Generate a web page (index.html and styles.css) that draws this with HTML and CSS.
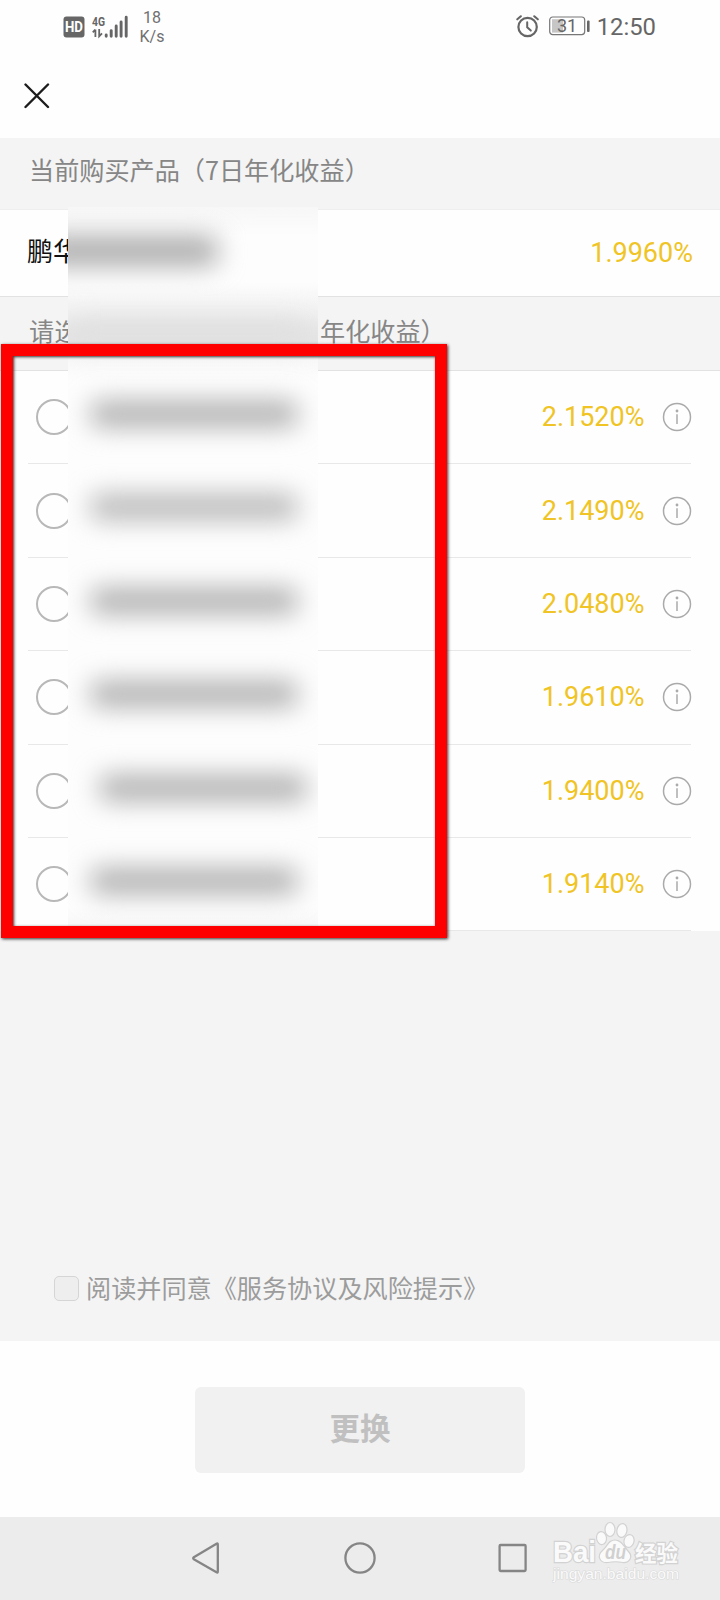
FILE: index.html
```html
<!DOCTYPE html>
<html lang="zh-CN">
<head>
<meta charset="utf-8">
<title>更换产品</title>
<link rel="stylesheet" href="styles.css">
</head>
<body>
<div class="screen">
  <header class="status">
    <div class="status-left">
      <svg class="hd" width="22" height="22" viewBox="0 0 22 22"><rect x="0.5" y="0.5" width="21" height="21" rx="3" fill="#666"/><text x="11" y="15.6" text-anchor="middle" class="hd-text" textLength="18" lengthAdjust="spacingAndGlyphs">HD</text></svg>
      <svg class="signal" width="36" height="26" viewBox="0 -2 36 26"><text x="0" y="10.7" class="net-text" textLength="13" lengthAdjust="spacingAndGlyphs">4G</text><g stroke="#666" fill="none"><path d="M3.4 22V14.5M0.8 17.3L3.2 14.6M7.2 14V21.3L10 18.3" stroke-width="1.8"/><g stroke-width="2.9" stroke-linecap="round"><path d="M14.2 20V21.2M19.2 15.6V21.2M24.2 11V21.2M29.1 7V21.2M34.2 2.3V21.2"/></g></g></svg>
      <div class="speed"><span>18</span><span>K/s</span></div>
    </div>
    <div class="status-right">
      <svg width="24" height="24" viewBox="0 0 24 24" fill="none" stroke="#666" stroke-linecap="round"><circle cx="11.6" cy="13" r="9.2" stroke-width="2.2"/><path d="M11.2 8.3V13.3L14.8 16.6" stroke-width="2"/><path d="M1.3 5.3L4.8 2.3M18.3 2.3L21.8 5.3" stroke-width="2.1"/></svg>
      <svg class="battery" width="41" height="20" viewBox="0 0 41 20"><rect x="0.7" y="1" width="35" height="17.6" rx="3" fill="none" stroke="#777" stroke-width="1.2"/><rect x="3" y="3.2" width="11" height="13.4" fill="#c6c6c6"/><rect x="38" y="4.5" width="2.6" height="11.5" rx="1" fill="#666"/><text x="18" y="16.2" text-anchor="middle" class="battery-text">31</text></svg>
      <span class="clock">12:50</span>
    </div>
  </header>
  <div class="titlebar">
    <svg width="26" height="26" viewBox="0 0 26 26" stroke="#1c1c1c" stroke-width="2.4" stroke-linecap="round"><path d="M1.5 1.5L24 24M24 1.5L1.5 24"/></svg>
  </div>
  <h2 class="band band-current">当前购买产品（7日年化收益）</h2>
  <div class="current"><span class="name">鹏华</span><span class="rate">1.9960%</span></div>
  <h2 class="band band-choose"><span>请选</span><span class="band-tail">年化收益）</span></h2>
  <ul class="list">
    <li class="item"><i class="radio"></i><span class="rate">2.1520%</span><svg class="info" viewBox="0 0 30 30"><circle cx="15" cy="15" r="13.5"/><path d="M15 12.2V22"/><circle class="dot" cx="15" cy="9" r="1.4"/></svg></li>
    <li class="item"><i class="radio"></i><span class="rate">2.1490%</span><svg class="info" viewBox="0 0 30 30"><circle cx="15" cy="15" r="13.5"/><path d="M15 12.2V22"/><circle class="dot" cx="15" cy="9" r="1.4"/></svg></li>
    <li class="item"><i class="radio"></i><span class="rate">2.0480%</span><svg class="info" viewBox="0 0 30 30"><circle cx="15" cy="15" r="13.5"/><path d="M15 12.2V22"/><circle class="dot" cx="15" cy="9" r="1.4"/></svg></li>
    <li class="item"><i class="radio"></i><span class="rate">1.9610%</span><svg class="info" viewBox="0 0 30 30"><circle cx="15" cy="15" r="13.5"/><path d="M15 12.2V22"/><circle class="dot" cx="15" cy="9" r="1.4"/></svg></li>
    <li class="item"><i class="radio"></i><span class="rate">1.9400%</span><svg class="info" viewBox="0 0 30 30"><circle cx="15" cy="15" r="13.5"/><path d="M15 12.2V22"/><circle class="dot" cx="15" cy="9" r="1.4"/></svg></li>
    <li class="item"><i class="radio"></i><span class="rate">1.9140%</span><svg class="info" viewBox="0 0 30 30"><circle cx="15" cy="15" r="13.5"/><path d="M15 12.2V22"/><circle class="dot" cx="15" cy="9" r="1.4"/></svg></li>
  </ul>
  <div class="agreement"><i class="checkbox"></i><span>阅读并同意《服务协议及风险提示》</span></div>
  <div class="action"><button class="submit">更换</button></div>
  <nav class="nav">
    <svg class="nav-icons" width="340" height="36" viewBox="0 0 340 36" fill="none" stroke="#858585" stroke-width="2.3" stroke-linejoin="round"><path d="M25.8 4.5V31.5Q25.8 33 24.5 32.3L1.8 19.2Q0.6 18.2 1.8 17.2L24.5 3.7Q25.8 3 25.8 4.5Z"/><circle cx="168" cy="18" r="14.6"/><rect x="307.6" y="5" width="26" height="26" rx="1"/></svg>
  </nav>

  <!-- privacy mask over product names -->
  <div class="mask">
    <i class="smudge smudge-current"></i>
    <i class="smudge smudge-band"></i>
    <div class="smudges">
      <i class="smudge"></i><i class="smudge lighter"></i><i class="smudge"></i><i class="smudge"></i><i class="smudge shifted"></i><i class="smudge"></i>
    </div>
  </div>
  <div class="highlight"></div>
  <svg class="watermark" width="132" height="64" viewBox="0 0 132 64">
    <g fill="#fafafa" stroke="#d2d2d2" stroke-width="1.2">
      <ellipse cx="49.5" cy="18" rx="5" ry="6.5" transform="rotate(-8 50 18)"/>
      <ellipse cx="58" cy="9.5" rx="5" ry="7"/>
      <ellipse cx="70" cy="10.5" rx="5" ry="7" transform="rotate(10 70 10)"/>
      <ellipse cx="77" cy="21" rx="5" ry="6.5" transform="rotate(15 77 21)"/>
      <path d="M63 20C70 20 72 27 76 31C82 37 77 43 71 42.5Q63 41 56 42.5C48 43.5 44 36 51 30C56 26 56 20 63 20Z"/>
      <g class="wm-big"><text x="1" y="42" textLength="43" lengthAdjust="spacingAndGlyphs">Bai</text><text class="wm-cn" x="83" y="40.5" textLength="43">经验</text></g>
    </g>
    <text class="wm-du" x="53" y="39" textLength="21" lengthAdjust="spacingAndGlyphs">du</text>
    <text class="wm-url" x="1" y="58.5" textLength="126" lengthAdjust="spacingAndGlyphs">jingyan.baidu.com</text>
  </svg>
</div>
</body>
</html>
```
FILE: styles.css
```css
* { box-sizing: border-box; }
body { margin: 0; background: #fff; font-family: Roboto, "Noto Sans CJK SC", sans-serif; }
.screen { position: relative; width: 720px; height: 1600px; overflow: hidden; display: flex; flex-direction: column; background: #fefefe; }
.screen > * { flex-shrink: 0; }

.status { height: 54px; display: flex; justify-content: space-between; padding: 0 64px 0 63px; color: #666; }
.status-left, .status-right { display: flex; align-items: flex-start; }
.status-left { padding-top: 9px; }
.hd { margin-top: 6.5px; }
.hd-text { font: 700 14.5px Roboto, sans-serif; fill: #fff; }
.signal { margin: 4px 0 0 7px; }
.net-text { font: 700 13.5px Roboto, sans-serif; fill: #666; }
.speed { width: 30px; margin-left: 9px; display: flex; flex-direction: column; align-items: center; font-size: 16px; line-height: 18.7px; color: #707070; }
.status-right { padding-top: 14px; }
.battery { margin: 2px 7px 0 9px; }
.battery-text { font: 400 18px Roboto, sans-serif; fill: #666; }
.clock { font-size: 23.8px; line-height: 28px; margin-top: -1px; }

.titlebar { height: 84px; padding: 29px 0 0 23.5px; }
.band { margin: 0; background: #f4f4f4; font-family: "Noto Sans CJK SC", sans-serif; font-size: 25.15px; font-weight: 400; line-height: 36px; color: #868686; }
.band-current { height: 72px; padding: 13px 0 0 29px; border-bottom: 1px solid #eee; }
.current { height: 86px; display: flex; align-items: center; justify-content: space-between; padding: 0 27px 0 27px; color: #111; }
.name { font: 400 26px/38px "Noto Sans CJK SC", sans-serif; padding-bottom: 6px; }
.band-choose { height: 75px; display: flex; padding: 15px 0 0 29px; border-top: 1px solid #e2e2e2; border-bottom: 1px solid #e2e2e2; }
.band-choose span:first-child { width: 291px; }
.rate { font-family: Roboto, sans-serif; font-size: 27px; color: #f0c424; }

.list { list-style: none; margin: 0; padding: 0 29px 0 28px; }
.item { height: 93.4px; display: flex; align-items: center; padding-left: 8px; border-bottom: 1px solid #e8e8e8; }
.radio { width: 36px; height: 36px; border: 2px solid #b8b8b8; border-radius: 50%; }
.item .rate { margin-left: auto; }
.info { width: 30px; height: 30px; margin: 0 -0.5px 0 17px; fill: none; stroke: #aaa; stroke-width: 1.5; }
.dot { fill: #aaa; stroke: none; }

.agreement { height: 409.6px; background: #f4f4f4; display: flex; align-items: flex-end; padding: 0 0 36px 54px; font-family: "Noto Sans CJK SC", sans-serif; font-size: 25.15px; font-weight: 400; line-height: 36px; color: #9c9c9c; }
.checkbox { width: 25px; height: 25px; margin: 0 7px 4px 0; border: 1.5px solid #d5d5d5; border-radius: 5px; background: #eee; }
.action { height: 176px; padding-top: 46px; display: flex; justify-content: center; align-items: flex-start; }
.submit { width: 330px; height: 86px; padding: 0 0 6px; border: 0; border-radius: 6px; background: #f1f1f1; color: #c0c0c0; font: 700 30.5px "Noto Sans CJK SC", sans-serif; }
.nav { height: 83px; background: #ececec; padding: 23.5px 0 0 192px; }

.mask { position: absolute; left: 67.5px; top: 207px; width: 250.5px; height: 728px; overflow: hidden; background: linear-gradient(#f7f7f7 0, #fdfdfd 30px, #fdfdfd 75px, #f1f1f1 105px, #e8e8e8 120px, #e4e4e4 136px, #f7f7f7 148px, #fdfdfd 175px, #fdfdfd 700px, #f5f5f5 728px); }
.smudge { display: block; width: 208px; height: 26px; margin-left: 22px; border-radius: 10px; background: #afafaf; filter: blur(13px); }
.smudge-current { width: 178px; height: 30px; margin: 29px 0 0 -28px; background: #acacac; }
.smudge-band { width: 240px; height: 24px; margin: 54px 0 0 0; background: #dfdfdf; }
.smudges { display: flex; flex-direction: column; gap: 67.4px; margin-top: 57px; }
.lighter { background: #b8b8b8; }
.shifted { margin-left: 31px; }

.highlight { position: absolute; left: 1px; top: 343.5px; width: 446px; height: 594px; border: 12px solid #f00; box-shadow: 1px 1px 3px #333, inset 1px 1px 3px #333; }

.watermark { position: absolute; left: 552px; top: 1520px; }
.wm-big text { font: 700 29px "Liberation Sans", sans-serif; paint-order: stroke; stroke-width: 2.4; }
.wm-big .wm-cn { font: 700 21.5px "Noto Sans CJK SC", sans-serif; }
.wm-du { font: italic 700 21px "Liberation Sans", sans-serif; fill: #d0d0d0; }
.wm-url { font: 400 14px "Liberation Sans", sans-serif; fill: #fafafa; stroke: #dadada; stroke-width: 1.2; paint-order: stroke; }
```
